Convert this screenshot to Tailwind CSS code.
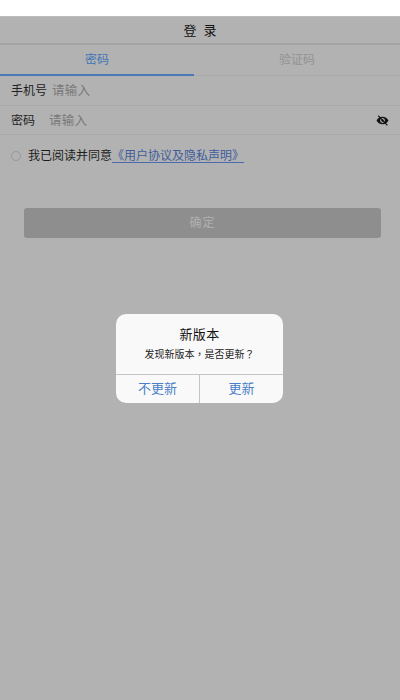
<!DOCTYPE html>
<html lang="zh">
<head>
<meta charset="utf-8">
<script src="https://cdn.jsdelivr.net/npm/@tailwindcss/browser@4"></script>
</head>
<body class="m-0">
<div class="relative w-[400px] h-[700px] overflow-hidden bg-[#b2b2b2] font-['Liberation_Sans','Noto_Sans_CJK_SC',sans-serif]">
  <div class="h-4 bg-white"></div>
  <header class="h-[29px] flex items-center justify-center border-b-2 border-[#a4a4a4] border-t border-t-[#bcbcbc] text-[13px] tracking-[7px] pl-[7px] pt-[2px] text-[#111]">登录</header>
  <div class="flex h-[31px] text-xs">
    <div class="w-[194px] flex flex-col">
      <div class="flex-1 flex items-center justify-center text-[#3f75b5]">密码</div>
      <div class="h-[2px] bg-[#4a78b8]"></div>
    </div>
    <div class="flex-1 flex flex-col">
      <div class="flex-1 flex items-center justify-center text-[#939393] pb-[1px]">验证码</div>
      <div class="h-[1px] bg-[#a9a9a9]"></div>
    </div>
  </div>
  <div class="h-[30px] flex items-center pl-[11px] pt-[1px] border-b border-[#a9a9a9] text-xs">
    <span class="text-[#222] w-[41px]">手机号</span>
    <span class="text-[#7a7a7a] text-[12.500px] tracking-[0.3px]">请输入</span>
  </div>
  <div class="h-[29px] flex items-center pl-[11px] pr-[11px] pt-[2px] border-b border-[#a9a9a9] text-xs">
    <span class="text-[#222] w-[38px]">密码</span>
    <span class="text-[#7a7a7a] text-[12.500px] tracking-[0.3px]">请输入</span>
    <svg class="ml-auto -mt-[2px]" width="13" height="13" viewBox="0 0 24 24" fill="#111">
      <path d="M12 5C7 5 3 8 1 12c2 4 6 7 11 7s9-3 11-7c-2-4-6-7-11-7zm0 11.500a4.500 4.500 0 1 1 0-9 4.500 4.500 0 0 1 0 9z"/>
      <circle cx="12" cy="12" r="2.200"/>
      <path d="M4 3l17 18" stroke="#111" stroke-width="2.200"/>
    </svg>
  </div>
  <div class="flex items-center h-[40px] pl-[11px] pt-[1px] text-xs">
    <span class="w-[10px] h-[10px] rounded-full border border-[#989898] mr-[7px]"></span>
    <span class="text-[#1c1c1c]">我已阅读并同意</span>
    <span class="text-[#3f5d9c] underline decoration-[#4a6cae] underline-offset-2">《用户协议及隐私声明》</span>
  </div>
  <div class="ml-6 mr-[19px] mt-[33px] h-[30px] rounded-[3px] bg-[#8e8e8e] flex items-center justify-center text-[#b0b0b0] text-xs tracking-[1px]">确定</div>

  <div class="absolute left-[116px] top-[314px] w-[167px] h-[89px] rounded-[10px] bg-[#f9f9f9] flex flex-col">
    <div class="flex-1 flex flex-col items-center">
      <div class="mt-[12px] text-[13px] leading-[17px] text-[#111] tracking-[0.3px]">新版本</div>
      <div lang="zh-TW" class="mt-[5px] text-[10px] leading-[14px] text-[#222] font-['Liberation_Sans','Noto_Sans_CJK_TC',sans-serif]">发现新版本，是否更新？</div>
    </div>
    <div class="h-[29px] flex border-t border-[#c4c4c4] text-[13px] text-[#4a7fc9]">
      <div class="w-[84px] flex items-center justify-center border-r border-[#c4c4c4]">不更新</div>
      <div class="flex-1 flex items-center justify-center">更新</div>
    </div>
  </div>
</div>
</body>
</html>
